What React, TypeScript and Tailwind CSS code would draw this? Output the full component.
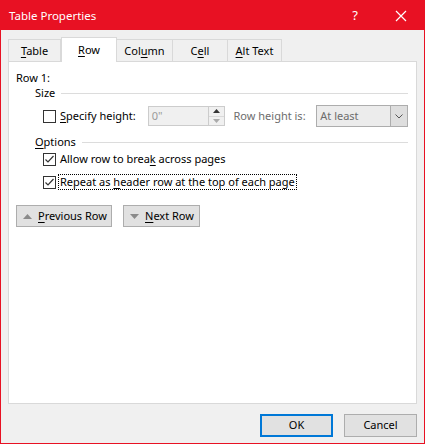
import React from "react";

const U = ({ children }: { children: React.ReactNode }) => (
  <span className="underline underline-offset-2 decoration-1">{children}</span>
);

const Check = ({ checked }: { checked?: boolean }) => (
  <div className="w-[13px] h-[13px] border border-[#333333] bg-white flex items-center justify-center shrink-0">
    {checked && (
      <svg width="11" height="11" viewBox="0 0 11 11">
        <path d="M1.5 5.5 L4 8 L9.5 2" fill="none" stroke="#333" strokeWidth="1.2" />
      </svg>
    )}
  </div>
);

export default function App() {
  return (
    <div
      className="w-[425px] h-[444px] border border-[#e81123] bg-[#f0f0f0] flex flex-col text-[11px] text-black whitespace-nowrap"
      style={{ fontFamily: '"Segoe UI", "Noto Sans", "Open Sans", sans-serif' }}
    >
      {/* title bar */}
      <div className="h-[29px] bg-[#e81123] flex items-center text-white shrink-0">
        <div className="pl-[8px] text-[11.5px] flex-1">Table Properties</div>
        <div className="w-[40px] text-center text-[13px] mr-[14px]">?</div>
        <div className="w-[24px] flex items-center justify-center mr-[11px]">
          <svg width="12" height="12" viewBox="0 0 12 12">
            <path d="M1 1 L11 11 M11 1 L1 11" stroke="white" strokeWidth="1.2" />
          </svg>
        </div>
      </div>

      {/* tabs */}
      <div className="flex items-end pl-[7px] mt-[6px] h-[25px] relative z-10">
        <div className="w-[53px] h-[22px] border border-[#d9d9d9] border-b-0 flex items-center justify-center pt-[1px]">
          <span>
            <U>T</U>able
          </span>
        </div>
        <div className="w-[56px] h-[25px] bg-white border border-[#d9d9d9] border-b-0 flex items-center justify-center -mb-[1px]">
          <span>
            <U>R</U>ow
          </span>
        </div>
        <div className="w-[56px] h-[22px] border border-[#d9d9d9] border-b-0 border-l-0 flex items-center justify-center pt-[1px]">
          <span>
            Col<U>u</U>mn
          </span>
        </div>
        <div className="w-[55px] h-[22px] border border-[#d9d9d9] border-b-0 border-l-0 flex items-center justify-center pt-[1px]">
          <span>
            C<U>e</U>ll
          </span>
        </div>
        <div className="w-[54px] h-[22px] border border-[#d9d9d9] border-b-0 border-l-0 flex items-center justify-center pt-[1px]">
          <span>
            <U>A</U>lt Text
          </span>
        </div>
      </div>

      {/* panel */}
      <div className="mx-[7px] h-[343px] bg-white border border-[#d9d9d9] flex flex-col pl-[7px] pr-[8px]">
        <div className="mt-[8px] h-[16px] leading-[16px]">Row 1:</div>

        <div className="flex items-center ml-[19px] mt-[-1px] h-[16px]">
          <span className="leading-[16px]">Size</span>
          <div className="flex-1 h-px bg-[#dcdcdc] ml-[6px]" />
        </div>

        <div className="flex items-center mt-[4px] h-[22px] ml-[27px]">
          <Check />
          <span className="ml-[4px] w-[88px]">
            <U>S</U>pecify height:
          </span>
          <div className="w-[77px] h-[20px] border border-[#cccccc] bg-[#f0f0f0] flex items-center">
            <span className="pl-[3px] text-[#9a9a9a] flex-1">0"</span>
            <div className="w-[16px] h-[18px] border-l border-[#cccccc] flex flex-col">
              <div className="flex-1 flex items-center justify-center border-b border-[#d9d9d9]">
                <svg width="7" height="4" viewBox="0 0 7 4">
                  <path d="M0 4 L3.5 0 L7 4 Z" fill="#333" />
                </svg>
              </div>
              <div className="flex-1 flex items-center justify-center">
                <svg width="7" height="4" viewBox="0 0 7 4">
                  <path d="M0 0 L3.5 4 L7 0 Z" fill="#aaa" />
                </svg>
              </div>
            </div>
          </div>
          <span className="ml-[9px] w-[83px] text-[#6d6d6d]">Row height is:</span>
          <div className="w-[92px] h-[22px] border border-[#adadad] bg-[#ececec] flex items-center">
            <span className="pl-[3px] text-[#6d6d6d] flex-1">At least</span>
            <div className="w-[17px] h-[20px] border-l border-[#adadad] bg-[#dedede] flex items-center justify-center">
              <svg width="8" height="5" viewBox="0 0 8 5">
                <path d="M0.5 0.5 L4 4 L7.5 0.5" fill="none" stroke="#555" strokeWidth="1" />
              </svg>
            </div>
          </div>
        </div>

        <div className="flex items-center ml-[19px] mt-[7px] h-[16px]">
          <span className="leading-[16px]">
            <U>O</U>ptions
          </span>
          <div className="flex-1 h-px bg-[#dcdcdc] ml-[6px]" />
        </div>

        <div className="flex items-center ml-[27px] mt-[1px] h-[16px]">
          <Check checked />
          <span className="ml-[3px] pl-[1px]">
            Allow row to brea<U>k</U> across pages
          </span>
        </div>

        <div className="flex items-center ml-[27px] mt-[7px] h-[16px]">
          <Check checked />
          <span className="ml-[2px] px-[1px] border border-dotted border-black leading-[14px]">
            Repeat as <U>h</U>eader row at the top of each page
          </span>
        </div>

        <div className="flex items-center mt-[15px] gap-[11px]">
          <div className="w-[96px] h-[22px] border border-[#adadad] bg-[#e1e1e1] flex items-center">
            <svg width="9" height="5" viewBox="0 0 9 5" className="ml-[6px]">
              <path d="M0 5 L4.5 0 L9 5 Z" fill="#8a8a8a" />
            </svg>
            <span className="ml-[6px]">
              <U>P</U>revious Row
            </span>
          </div>
          <div className="w-[77px] h-[22px] border border-[#adadad] bg-[#e1e1e1] flex items-center">
            <svg width="9" height="5" viewBox="0 0 9 5" className="ml-[6px]">
              <path d="M0 0 L4.5 5 L9 0 Z" fill="#8a8a8a" />
            </svg>
            <span className="ml-[6px]">
              <U>N</U>ext Row
            </span>
          </div>
        </div>
      </div>

      {/* bottom buttons */}
      <div className="flex justify-end pr-[7px] mt-[10px] gap-[11px]">
        <div className="w-[73px] h-[23px] border-2 border-[#0078d7] bg-[#e1e1e1] flex items-center justify-center">
          OK
        </div>
        <div className="w-[73px] h-[23px] border border-[#adadad] bg-[#e1e1e1] flex items-center justify-center">
          Cancel
        </div>
      </div>
    </div>
  );
}
